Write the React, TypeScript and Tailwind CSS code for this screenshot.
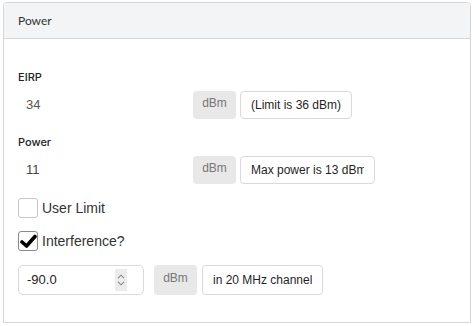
const UnitBox = ({ pad = "pt-[5px]" }: { pad?: string }) => (
  <div
    className={`w-[43px] self-stretch rounded-[4px] bg-[#e8e8e8] text-center text-[12px] leading-[14px] text-[#777] ${pad}`}
  >
    dBm
  </div>
);

const NoteBox = ({ text, width = "", px = "px-[10px]" }: { text: string; width?: string; px?: string }) => (
  <div
    className={`${width} ${px} h-full flex items-center rounded-[4px] border border-[#d9d9d9] bg-white text-[12px] text-[#1f1f1f]`}
  >
    <span className="block overflow-hidden whitespace-nowrap">{text}</span>
  </div>
);

const Check = ({ checked }: { checked?: boolean }) => (
  <div
    className={`w-[20px] h-[20px] rounded-[3px] border bg-white flex items-center justify-center ${
      checked ? "border-[#8a8a8a]" : "border-[#c8c8c8]"
    }`}
  >
    {checked && (
      <svg width="17" height="15" viewBox="0 0 17 15">
        <path
          d="M2 8 L6.5 12 L15 2.5"
          fill="none"
          stroke="#000"
          strokeWidth="3.6"
          strokeLinejoin="round"
          strokeLinecap="round"
        />
      </svg>
    )}
  </div>
);

export default function App() {
  return (
    <div className="pl-[3px] pt-[2px] bg-white w-[475px] h-[326px] font-['Liberation_Sans',Arial,sans-serif]">
      <div className="w-[468px] h-[321px] border border-[#d6d6d6] rounded-t-[4px] overflow-hidden">
        {/* header */}
        <div className="h-[36px] bg-[#f3f4f6] border-b border-[#d6d6d6] px-[14px] flex items-center">
          <span className="font-['Lato',sans-serif] text-[12px] text-[#333]">Power</span>
        </div>

        <div className="px-[14px] flex flex-col">
          {/* EIRP */}
          <div className="mt-[31px] font-['Inter',sans-serif] font-medium text-[11px] leading-[14px] text-[#222]">
            EIRP
          </div>
          <div className="mt-[7px] h-[28px] flex items-center">
            <div className="w-[172px] pl-[8px] text-[13px] text-[#555]">34</div>
            <div className="ml-[3px] flex h-full gap-[4px]">
              <UnitBox />
              <NoteBox text="(Limit is 36 dBm)" />
            </div>
          </div>

          {/* Power */}
          <div className="mt-[16px] font-['Inter',sans-serif] font-medium text-[11px] leading-[14px] text-[#222]">
            Power
          </div>
          <div className="mt-[7px] h-[28px] flex items-center">
            <div className="w-[172px] pl-[8px] text-[13px] text-[#444]">11</div>
            <div className="ml-[3px] flex h-full gap-[4px]">
              <UnitBox />
              <NoteBox text="Max power is 13 dBm" width="w-[135px]" px="px-[10px]" />
            </div>
          </div>

          {/* checkboxes */}
          <label className="mt-[14px] h-[20px] flex items-center gap-[4px]">
            <Check />
            <span className="text-[14px] leading-[16px] text-[#333]">User Limit</span>
          </label>
          <label className="mt-[13px] h-[20px] flex items-center gap-[4px]">
            <Check checked />
            <span className="text-[14px] leading-[16px] text-[#333]">Interference?</span>
          </label>

          {/* threshold */}
          <div className="mt-[14px] h-[30px] flex">
            <div className="w-[126px] h-full rounded-[5px] border border-[#d9d9d9] flex items-center pl-[8px] pr-[16px]">
              <span className="flex-1 text-[13px] text-[#222]">-90.0</span>
              <div className="w-[12px] h-[22px] bg-[#ececec] flex flex-col items-center justify-center gap-[2px]">
                <svg width="8" height="5" viewBox="0 0 8 5">
                  <path d="M1 4.2 L4 1.2 L7 4.2" fill="none" stroke="#888" strokeWidth="1.1" />
                </svg>
                <svg width="8" height="5" viewBox="0 0 8 5">
                  <path d="M1 0.8 L4 3.8 L7 0.8" fill="none" stroke="#888" strokeWidth="1.1" />
                </svg>
              </div>
            </div>
            <div className="ml-[10px] flex h-full gap-[5px]">
              <UnitBox pad="pt-[6px]" />
              <NoteBox text="in 20 MHz channel" />
            </div>
          </div>
        </div>
      </div>
    </div>
  );
}
